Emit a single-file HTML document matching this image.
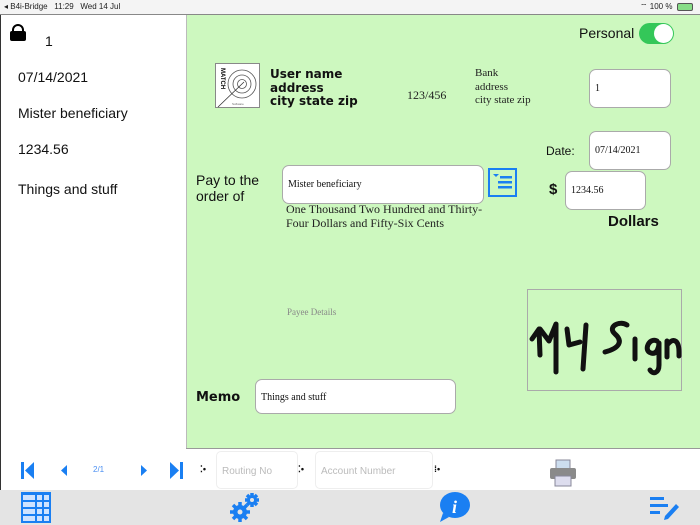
<!DOCTYPE html>
<html><head><meta charset="utf-8"><style>
*{margin:0;padding:0;box-sizing:border-box}
body{width:700px;height:525px;position:relative;overflow:hidden;background:#fff;font-family:"Liberation Sans",sans-serif;color:#111}
.a{position:absolute}
.ser{font-family:"Liberation Serif",serif}
.box{position:absolute;background:#fff;border:1px solid #aaa;border-radius:7px;font-family:"Liberation Serif",serif;font-size:10px;padding-left:5px;display:flex;align-items:center}
</style></head><body>
<div class="a" style="left:0;top:0;width:700px;height:14px;background:#f4f4f4;font-size:8px;color:#222">
 <span class="a" style="left:4px;top:2px">◂ B4i-Bridge&nbsp;&nbsp; 11:29&nbsp;&nbsp; Wed 14 Jul</span>
 <span class="a" style="left:640px;top:2px">⌔ 100 %</span>
 <span class="a" style="left:677px;top:3px;width:16px;height:8px;border:1px solid #555;border-radius:2px;background:#8d8"></span>
</div>
<div class="a" style="left:0;top:14px;width:700px;height:1px;background:#888"></div>
<div class="a" style="left:0;top:15px;width:1px;height:475px;background:#333"></div>
<div class="a" style="left:186px;top:15px;width:514px;height:433px;background:#cdf8bf;border-left:1px solid #bbb"></div>
<div class="a" style="left:186px;top:448px;width:514px;height:1px;background:#999"></div>
<!-- lock -->
<div class="a" style="left:12px;top:24px;width:12px;height:12px;border:2.5px solid #000;border-radius:6px 6px 0 0"></div>
<div class="a" style="left:10px;top:31px;width:16px;height:10px;background:#000;border-radius:2px"></div>
<div class="a" style="left:45px;top:33px;font-size:14px">1</div>
<div class="a" style="left:18px;top:69px;font-size:14px">07/14/2021</div>
<div class="a" style="left:18px;top:105px;font-size:14px">Mister beneficiary</div>
<div class="a" style="left:18px;top:141px;font-size:14px">1234.56</div>
<div class="a" style="left:18px;top:181px;font-size:14px">Things and stuff</div>
<!-- check -->
<div class="a" style="left:579px;top:25px;font-size:14px">Personal</div>
<div class="a" style="left:639px;top:23px;width:35px;height:21px;border-radius:11px;background:#34c759"><div class="a" style="left:15px;top:1px;width:19px;height:19px;border-radius:50%;background:#fff"></div></div>
<div class="a" style="left:215px;top:63px;width:45px;height:45px;background:#fff;border:1px solid #888">
<svg width="45" height="45" viewBox="0 0 45 45"><circle cx="26" cy="20" r="14" fill="none" stroke="#555" stroke-width=".8"/><circle cx="26" cy="20" r="9" fill="none" stroke="#555" stroke-width=".8"/><circle cx="26" cy="20" r="4.5" fill="none" stroke="#555" stroke-width=".8"/><line x1="2" y1="43" x2="28" y2="18" stroke="#333" stroke-width=".8"/><text x="5" y="4" font-size="6" font-weight="bold" transform="rotate(90 5 4)" font-family="Liberation Sans">MATCH</text><text x="16" y="41" font-size="3" fill="#666" font-family="Liberation Sans">Software</text></svg></div>
<div class="a" style="left:270px;top:68px;font-size:12px;font-weight:bold;line-height:13.5px;font-family:'DejaVu Sans',sans-serif">User name<br>address<br>city state zip</div>
<div class="a ser" style="left:407px;top:88px;font-size:12px;color:#222">123/456</div>
<div class="a ser" style="left:475px;top:67px;font-size:11px;line-height:13.5px;color:#222">Bank<br>address<br>city state zip</div>
<div class="box" style="left:589px;top:69px;width:82px;height:39px">1</div>
<div class="a" style="left:546px;top:144px;font-size:12px">Date:</div>
<div class="box" style="left:589px;top:131px;width:82px;height:39px">07/14/2021</div>
<div class="a" style="left:549px;top:181px;font-size:15px;font-weight:bold">$</div>
<div class="box" style="left:565px;top:171px;width:81px;height:39px">1234.56</div>
<div class="a" style="left:608px;top:213px;font-size:15px;font-weight:bold">Dollars</div>
<div class="a" style="left:196px;top:172px;font-size:14px;line-height:16px">Pay to the<br>order of</div>
<div class="box" style="left:282px;top:165px;width:202px;height:39px">Mister beneficiary</div>
<svg class="a" style="left:488px;top:168px" width="29" height="29" viewBox="0 0 29 29"><rect x="1" y="1" width="27" height="27" fill="none" stroke="#1a7ff2" stroke-width="2"/><path d="M5 6h6l-3 3z" fill="#1a7ff2"/><rect x="12" y="8" width="12" height="2.5" fill="#1a7ff2"/><rect x="10" y="13" width="14" height="2.5" fill="#1a7ff2"/><rect x="10" y="18" width="14" height="2.5" fill="#1a7ff2"/></svg>
<div class="a ser" style="left:286px;top:203px;font-size:12px;line-height:13.5px;color:#222">One Thousand Two Hundred and Thirty-<br>Four Dollars and Fifty-Six Cents</div>
<div class="a ser" style="left:287px;top:307px;font-size:9px;color:#888">Payee Details</div>
<div class="a" style="left:527px;top:289px;width:155px;height:102px;border:1px solid #aaa"></div>
<svg class="a" style="left:527px;top:289px" width="155" height="102" viewBox="0 0 155 102"><g fill="none" stroke="#111" stroke-width="5" stroke-linecap="round" stroke-linejoin="round"><path d="M5 50l7-10 1 26"/><path d="M13 40l9 12 7-17 0 48"/><path d="M40 40l2 16 11-3"/><path d="M59 36l-3 44"/><path d="M100 36c-8-5-20 2-12 9s5 14-10 18"/><path d="M108 50l0 20"/><path d="M130 52c-8-4-14 10-6 12 6 2 8-6 8-10l0 22c0 8-6 10-9 5"/><path d="M140 52l0 16M141 55c6-7 11-3 11 8l0 4"/></g></svg>
<div class="a" style="left:196px;top:390px;font-weight:bold;font-family:'DejaVu Sans',sans-serif;font-size:13px">Memo</div>
<div class="box" style="left:255px;top:379px;width:201px;height:35px;align-items:flex-start;padding-top:12px">Things and stuff</div>
<!-- toolbar -->
<svg class="a" style="left:20px;top:461px" width="175" height="20" viewBox="0 0 175 20" fill="#1a7ff2"><rect x="1" y="1" width="3" height="17"/><path d="M14 1v17l-9-8.5z"/><path d="M47 4v11l-6-5.5z"/><path d="M121 4v11l6-5.5z"/><path d="M150 1v17l9-8.5z"/><rect x="160" y="1" width="3" height="17"/></svg>
<div class="a" style="left:93px;top:465px;font-size:8px;color:#4b8ff2">2/1</div>
<div class="a" style="left:200px;top:464px;font-size:9px;font-weight:bold">⁚•</div>
<div class="a" style="left:216px;top:451px;width:82px;height:38px;border:1px solid #eee;border-radius:5px;font-size:10px;color:#bbb;padding:14px 0 0 5px">Routing No</div>
<div class="a" style="left:298px;top:464px;font-size:9px;font-weight:bold">⁚•</div>
<div class="a" style="left:315px;top:451px;width:118px;height:38px;border:1px solid #eee;border-radius:5px;font-size:10px;color:#bbb;padding:14px 0 0 5px">Account Number</div>
<div class="a" style="left:434px;top:464px;font-size:9px;font-weight:bold">⁞•</div>
<svg class="a" style="left:548px;top:458px" width="30" height="30" viewBox="0 0 30 30"><rect x="8" y="2" width="14" height="10" fill="#cde" stroke="#889"/><rect x="2" y="10" width="26" height="11" rx="2" fill="#8a8a8a"/><rect x="7" y="18" width="16" height="10" fill="#dde" stroke="#889"/></svg>
<div class="a" style="left:0;top:490px;width:700px;height:35px;background:#e4e4e4"></div>
<svg class="a" style="left:21px;top:492px" width="30" height="31" viewBox="0 0 30 31"><rect width="30" height="31" fill="#1a7ff2"/><g fill="#cfe3ff"><rect x="2" y="3" width="12" height="5"/><rect x="16" y="3" width="5" height="5"/><rect x="23" y="3" width="5" height="5"/><rect x="2" y="10" width="12" height="5"/><rect x="16" y="10" width="5" height="5"/><rect x="23" y="10" width="5" height="5"/><rect x="2" y="17" width="12" height="5"/><rect x="16" y="17" width="5" height="5"/><rect x="23" y="17" width="5" height="5"/><rect x="2" y="24" width="12" height="5"/><rect x="16" y="24" width="5" height="5"/><rect x="23" y="24" width="5" height="5"/></g></svg>
<svg class="a" style="left:229px;top:491px" width="32" height="32" viewBox="0 0 32 32" fill="#1a7ff2"><circle cx="11" cy="21" r="7"/><g stroke="#1a7ff2" stroke-width="3.5"><path d="M11 11v20M1 21h20M4 14l14 14M18 14L4 28"/><path d="M23 2v14M16 9h14M18 4l10 10M28 4L18 14"/></g><circle cx="23" cy="9" r="5"/><circle cx="11" cy="21" r="2.5" fill="#e4e4e4"/><circle cx="23" cy="9" r="2" fill="#e4e4e4"/></svg>
<svg class="a" style="left:439px;top:491px" width="32" height="32" viewBox="0 0 32 32"><ellipse cx="16" cy="14" rx="15" ry="13" fill="#1a7ff2"/><path d="M4 22L1 31l9-5z" fill="#1a7ff2"/><text x="13" y="22" font-size="18" font-weight="bold" font-style="italic" fill="#fff" font-family="Liberation Serif">i</text></svg>
<svg class="a" style="left:650px;top:496px" width="30" height="24" viewBox="0 0 30 24" fill="#1a7ff2"><rect x="0" y="1" width="14" height="3"/><rect x="0" y="8" width="18" height="3"/><rect x="0" y="15" width="10" height="3"/><path d="M26 8l3 3-11 12-4 1 1-4z"/></svg>
</body></html>
